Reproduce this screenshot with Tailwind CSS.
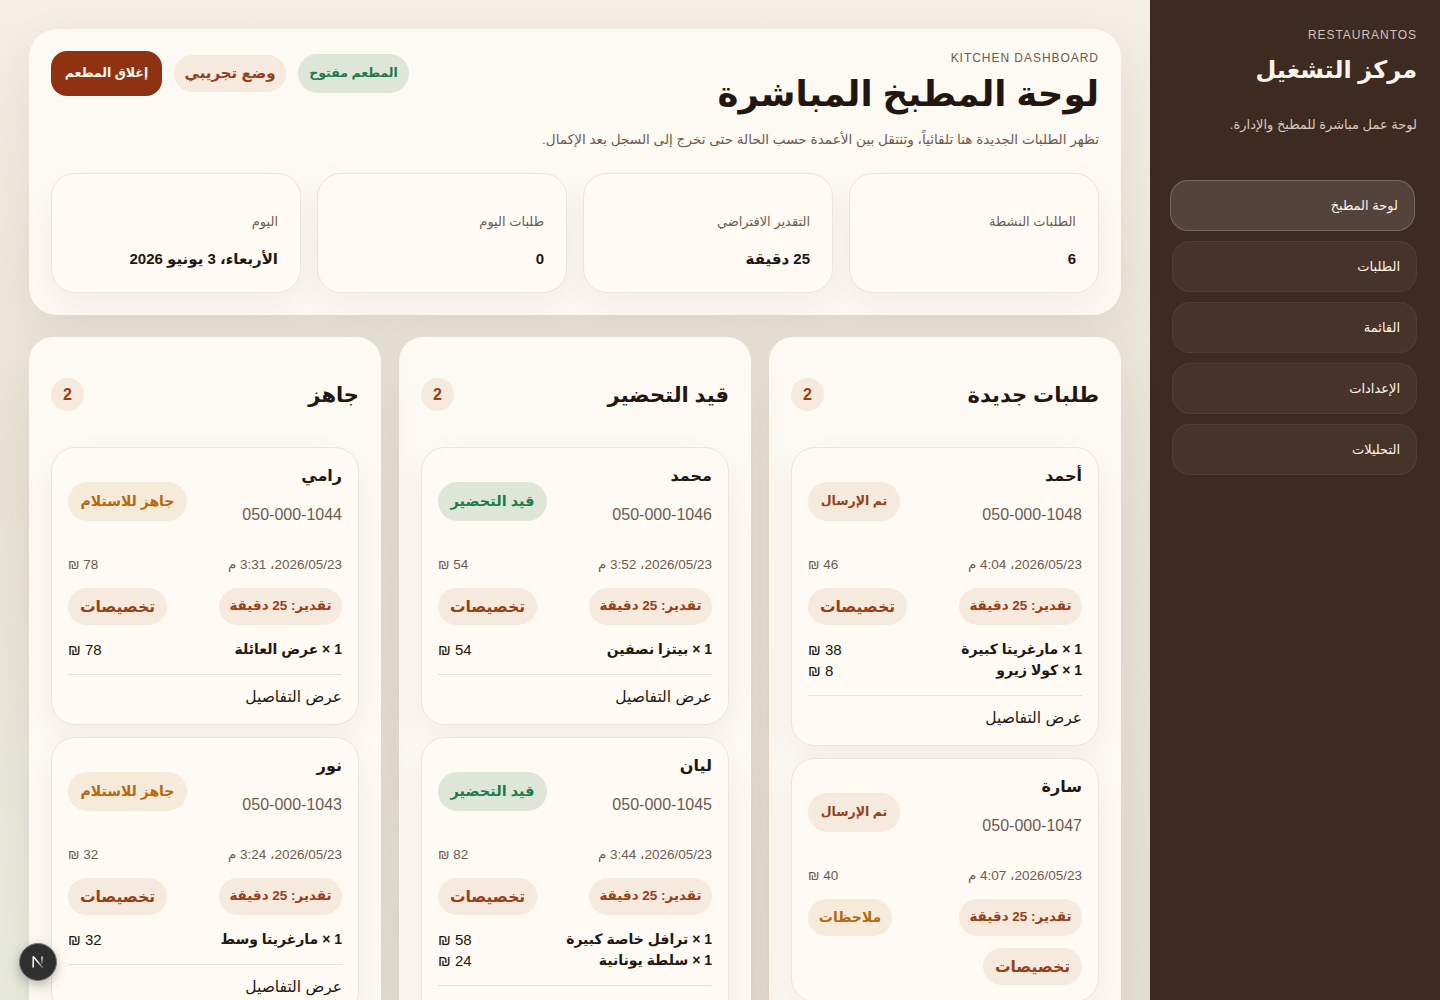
<!DOCTYPE html>
<html lang="ar" dir="rtl">
<head>
    <meta charset="UTF-8">
    <meta name="viewport" content="width=device-width, initial-scale=1.0">
    <title>لوحة المطبخ المباشرة</title>
    <script src="https://cdn.jsdelivr.net/npm/@tailwindcss/browser@4"></script>
</head>
<body class="font-['Liberation_Sans','DejaVu_Sans',sans-serif] text-[#211710]">
<div class="relative flex h-[1000px] w-[1440px] overflow-hidden bg-[radial-gradient(circle_at_0%_100%,#e9ebde_0,transparent_30%),linear-gradient(180deg,#f4eee4_0%,#e9e3d7_45%,#e6e0d4_100%)]">

    <!-- Sidebar -->
    <aside class="w-[290px] shrink-0 bg-[#3d2a20] pl-[22px] pr-[23px] pt-[27px] text-[#fbf4ec]">
        <p dir="ltr" class="text-right text-[12px] leading-[16px] tracking-[0.08em] text-[#cfc3b8]">RESTAURANTOS</p>
        <h2 class="mt-[7px] text-[24px] font-bold leading-[40px]">مركز التشغيل</h2>
        <p class="mt-[24px] text-[13px] leading-[22px] text-[#d6cabf]">لوحة عمل مباشرة للمطبخ والإدارة.</p>
        <nav class="mt-[44px] flex flex-col gap-[10px]">
            <a class="flex h-[51px] -translate-x-0.5 items-center rounded-[18px] border border-white/20 bg-white/12 px-[16px] text-[13px] font-medium">لوحة المطبخ</a>
            <a class="flex h-[51px] items-center rounded-[18px] border border-white/5 bg-white/5 px-[16px] text-[13px] font-medium">الطلبات</a>
            <a class="flex h-[51px] items-center rounded-[18px] border border-white/5 bg-white/5 px-[16px] text-[13px] font-medium">القائمة</a>
            <a class="flex h-[51px] items-center rounded-[18px] border border-white/5 bg-white/5 px-[16px] text-[13px] font-medium">الإعدادات</a>
            <a class="flex h-[51px] items-center rounded-[18px] border border-white/5 bg-white/5 px-[16px] text-[13px] font-medium">التحليلات</a>
        </nav>
    </aside>

    <main class="w-[1150px] shrink-0 p-[29px]">
        <!-- Header -->
        <section class="h-[286px] rounded-[28px] bg-[#fdf9f3] p-[22px] shadow-[0_18px_50px_rgba(70,50,30,0.08)]">
            <div class="flex items-start justify-between">
                <div>
                    <p dir="ltr" class="text-right text-[12px] leading-[14px] tracking-[0.08em] text-[#6f5a4e]">KITCHEN DASHBOARD</p>
                    <h1 class="mt-[2px] text-[35.5px] font-bold leading-[54px]">لوحة المطبخ المباشرة</h1>
                    <p class="mt-[8px] text-[13.6px] leading-[22px] text-[#6f5a4e]">تظهر الطلبات الجديدة هنا تلقائياً، وتنتقل بين الأعمدة حسب الحالة حتى تخرج إلى السجل بعد الإكمال.</p>
                </div>
                <div class="flex items-center gap-[12px]">
                    <span class="flex h-[39px] w-[111px] items-center justify-center rounded-full bg-[#dde6d7] text-[12.5px] font-bold text-[#1f7a4d]">المطعم مفتوح</span>
                    <span class="flex h-[37px] w-[112px] items-center justify-center rounded-full bg-[#f6e9dd] text-[15px] font-bold text-[#96401a]">وضع تجريبي</span>
                    <button class="h-[45px] w-[111px] rounded-[16px] bg-[#8f3212] text-[12.5px] font-bold text-[#fff8f1]">إغلاق المطعم</button>
                </div>
            </div>
            <div class="mt-[22px] grid grid-cols-4 gap-[16px]">
                <div class="h-[120px] rounded-[24px] border border-[#ebe4da] bg-[#fffaf4] px-[22px] pt-[37px] shadow-[0_14px_36px_rgba(70,50,30,0.06)]">
                    <p class="text-[13px] leading-[22px] text-[#6f5a4e]">الطلبات النشطة</p>
                    <p class="mt-[14px] text-[15px] font-bold leading-[24px]">6</p>
                </div>
                <div class="h-[120px] rounded-[24px] border border-[#ebe4da] bg-[#fffaf4] px-[22px] pt-[37px] shadow-[0_14px_36px_rgba(70,50,30,0.06)]">
                    <p class="text-[13px] leading-[22px] text-[#6f5a4e]">التقدير الافتراضي</p>
                    <p class="mt-[14px] text-[15px] font-bold leading-[24px]">25 دقيقة</p>
                </div>
                <div class="h-[120px] rounded-[24px] border border-[#ebe4da] bg-[#fffaf4] px-[22px] pt-[37px] shadow-[0_14px_36px_rgba(70,50,30,0.06)]">
                    <p class="text-[13px] leading-[22px] text-[#6f5a4e]">طلبات اليوم</p>
                    <p class="mt-[14px] text-[15px] font-bold leading-[24px]">0</p>
                </div>
                <div class="h-[120px] rounded-[24px] border border-[#ebe4da] bg-[#fffaf4] px-[22px] pt-[37px] shadow-[0_14px_36px_rgba(70,50,30,0.06)]">
                    <p class="text-[13px] leading-[22px] text-[#6f5a4e]">اليوم</p>
                    <p class="mt-[14px] text-[15px] font-bold leading-[24px]">الأربعاء، 3 يونيو 2026</p>
                </div>
            </div>
        </section>

        <!-- Board -->
        <div class="mt-[22px] grid grid-cols-3 items-start gap-[18px]">

            <!-- New orders -->
            <section class="rounded-[24px] bg-[#fdf9f3] p-[22px] shadow-[0_18px_50px_rgba(70,50,30,0.08)]">
                <div class="flex h-[71px] items-center justify-between">
                    <h3 class="text-[21px] font-bold leading-[32px]">طلبات جديدة</h3>
                    <span class="flex h-[33px] w-[33px] items-center justify-center rounded-full bg-[#f6e9dd] text-[16px] font-bold text-[#96401a]">2</span>
                </div>
                <div class="mt-[17px] flex flex-col gap-[12px]">
                    <article class="rounded-[24px] border border-[#ebe4da] bg-[#fffaf4] px-[16px] pb-[16px] pt-[17px] shadow-[0_14px_36px_rgba(70,50,30,0.06)]">
                        <div class="flex items-start justify-between">
                            <div>
                                <p class="text-[16px] font-bold leading-[22px]">أحمد</p>
                                <p dir="ltr" class="mt-[16px] text-right text-[16px] leading-[24px] text-[#6f5a4e]">050-000-1048</p>
                            </div>
                            <span class="mt-[17px] flex h-[39px] w-[92px] items-center justify-center rounded-full bg-[#f6e9dd] text-[12.5px] font-bold text-[#96401a]">تم الإرسال</span>
                        </div>
                        <div class="mt-[28px] flex items-center justify-between text-[13.5px] leading-[20px] text-[#6f5a4e]">
                            <span>2026/05/23، 4:04 م</span>
                            <span>46 ₪</span>
                        </div>
                        <div class="mt-[13px] flex flex-wrap justify-between gap-[12px]">
                            <span class="flex h-[37px] w-[123px] items-center justify-center rounded-full bg-[#f6e9dd] text-[13.5px] font-bold text-[#96401a]">تقدير: 25 دقيقة</span>
                            <span class="flex h-[37px] w-[99px] items-center justify-center rounded-full bg-[#f6e9dd] text-[15.5px] font-bold text-[#96401a]">تخصيصات</span>
                        </div>
                        <div class="mt-[14px] text-[15px] leading-[21px]">
                            <div class="flex justify-between"><span class="text-[14px] font-bold">1 × مارغريتا كبيرة</span><span>38 ₪</span></div>
                            <div class="flex justify-between"><span class="text-[14px] font-bold">1 × كولا زيرو</span><span>8 ₪</span></div>
                        </div>
                        <div class="mt-[14px] border-t border-[#e8e1d7] pt-[11px] text-[15.5px] font-medium leading-[22px]">عرض التفاصيل</div>
                    </article>
                    <article class="rounded-[24px] border border-[#ebe4da] bg-[#fffaf4] px-[16px] pb-[16px] pt-[17px] shadow-[0_14px_36px_rgba(70,50,30,0.06)]">
                        <div class="flex items-start justify-between">
                            <div>
                                <p class="text-[16px] font-bold leading-[22px]">سارة</p>
                                <p dir="ltr" class="mt-[16px] text-right text-[16px] leading-[24px] text-[#6f5a4e]">050-000-1047</p>
                            </div>
                            <span class="mt-[17px] flex h-[39px] w-[92px] items-center justify-center rounded-full bg-[#f6e9dd] text-[12.5px] font-bold text-[#96401a]">تم الإرسال</span>
                        </div>
                        <div class="mt-[28px] flex items-center justify-between text-[13.5px] leading-[20px] text-[#6f5a4e]">
                            <span>2026/05/23، 4:07 م</span>
                            <span>40 ₪</span>
                        </div>
                        <div class="mt-[13px] flex flex-wrap justify-between gap-[12px]">
                            <span class="flex h-[37px] w-[123px] items-center justify-center rounded-full bg-[#f6e9dd] text-[13.5px] font-bold text-[#96401a]">تقدير: 25 دقيقة</span>
                            <span class="flex h-[37px] w-[84px] items-center justify-center rounded-full bg-[#f6eadb] text-[14px] font-bold text-[#b46a0c]">ملاحظات</span>
                            <span class="flex h-[37px] w-[99px] items-center justify-center rounded-full bg-[#f6e9dd] text-[15.5px] font-bold text-[#96401a]">تخصيصات</span>
                        </div>
                    </article>
                </div>
            </section>

            <!-- Preparing -->
            <section class="rounded-[24px] bg-[#fdf9f3] p-[22px] shadow-[0_18px_50px_rgba(70,50,30,0.08)]">
                <div class="flex h-[71px] items-center justify-between">
                    <h3 class="text-[21px] font-bold leading-[32px]">قيد التحضير</h3>
                    <span class="flex h-[33px] w-[33px] items-center justify-center rounded-full bg-[#f6e9dd] text-[16px] font-bold text-[#96401a]">2</span>
                </div>
                <div class="mt-[17px] flex flex-col gap-[12px]">
                    <article class="rounded-[24px] border border-[#ebe4da] bg-[#fffaf4] px-[16px] pb-[16px] pt-[17px] shadow-[0_14px_36px_rgba(70,50,30,0.06)]">
                        <div class="flex items-start justify-between">
                            <div>
                                <p class="text-[16px] font-bold leading-[22px]">محمد</p>
                                <p dir="ltr" class="mt-[16px] text-right text-[16px] leading-[24px] text-[#6f5a4e]">050-000-1046</p>
                            </div>
                            <span class="mt-[17px] flex h-[39px] w-[109px] items-center justify-center rounded-full bg-[#dde6d7] text-[14.5px] font-bold text-[#1f7a4d]">قيد التحضير</span>
                        </div>
                        <div class="mt-[28px] flex items-center justify-between text-[13.5px] leading-[20px] text-[#6f5a4e]">
                            <span>2026/05/23، 3:52 م</span>
                            <span>54 ₪</span>
                        </div>
                        <div class="mt-[13px] flex flex-wrap justify-between gap-[12px]">
                            <span class="flex h-[37px] w-[123px] items-center justify-center rounded-full bg-[#f6e9dd] text-[13.5px] font-bold text-[#96401a]">تقدير: 25 دقيقة</span>
                            <span class="flex h-[37px] w-[99px] items-center justify-center rounded-full bg-[#f6e9dd] text-[15.5px] font-bold text-[#96401a]">تخصيصات</span>
                        </div>
                        <div class="mt-[14px] text-[15px] leading-[21px]">
                            <div class="flex justify-between"><span class="text-[14px] font-bold">1 × بيتزا نصفين</span><span>54 ₪</span></div>
                        </div>
                        <div class="mt-[14px] border-t border-[#e8e1d7] pt-[11px] text-[15.5px] font-medium leading-[22px]">عرض التفاصيل</div>
                    </article>
                    <article class="rounded-[24px] border border-[#ebe4da] bg-[#fffaf4] px-[16px] pb-[16px] pt-[17px] shadow-[0_14px_36px_rgba(70,50,30,0.06)]">
                        <div class="flex items-start justify-between">
                            <div>
                                <p class="text-[16px] font-bold leading-[22px]">ليان</p>
                                <p dir="ltr" class="mt-[16px] text-right text-[16px] leading-[24px] text-[#6f5a4e]">050-000-1045</p>
                            </div>
                            <span class="mt-[17px] flex h-[39px] w-[109px] items-center justify-center rounded-full bg-[#dde6d7] text-[14.5px] font-bold text-[#1f7a4d]">قيد التحضير</span>
                        </div>
                        <div class="mt-[28px] flex items-center justify-between text-[13.5px] leading-[20px] text-[#6f5a4e]">
                            <span>2026/05/23، 3:44 م</span>
                            <span>82 ₪</span>
                        </div>
                        <div class="mt-[13px] flex flex-wrap justify-between gap-[12px]">
                            <span class="flex h-[37px] w-[123px] items-center justify-center rounded-full bg-[#f6e9dd] text-[13.5px] font-bold text-[#96401a]">تقدير: 25 دقيقة</span>
                            <span class="flex h-[37px] w-[99px] items-center justify-center rounded-full bg-[#f6e9dd] text-[15.5px] font-bold text-[#96401a]">تخصيصات</span>
                        </div>
                        <div class="mt-[14px] text-[15px] leading-[21px]">
                            <div class="flex justify-between"><span class="text-[14px] font-bold">1 × ترافل خاصة كبيرة</span><span>58 ₪</span></div>
                            <div class="flex justify-between"><span class="text-[14px] font-bold">1 × سلطة يونانية</span><span>24 ₪</span></div>
                        </div>
                        <div class="mt-[14px] border-t border-[#e8e1d7] pt-[11px] text-[15.5px] font-medium leading-[22px]">عرض التفاصيل</div>
                    </article>
                </div>
            </section>

            <!-- Ready -->
            <section class="rounded-[24px] bg-[#fdf9f3] p-[22px] shadow-[0_18px_50px_rgba(70,50,30,0.08)]">
                <div class="flex h-[71px] items-center justify-between">
                    <h3 class="text-[21px] font-bold leading-[32px]">جاهز</h3>
                    <span class="flex h-[33px] w-[33px] items-center justify-center rounded-full bg-[#f6e9dd] text-[16px] font-bold text-[#96401a]">2</span>
                </div>
                <div class="mt-[17px] flex flex-col gap-[12px]">
                    <article class="rounded-[24px] border border-[#ebe4da] bg-[#fffaf4] px-[16px] pb-[16px] pt-[17px] shadow-[0_14px_36px_rgba(70,50,30,0.06)]">
                        <div class="flex items-start justify-between">
                            <div>
                                <p class="text-[16px] font-bold leading-[22px]">رامي</p>
                                <p dir="ltr" class="mt-[16px] text-right text-[16px] leading-[24px] text-[#6f5a4e]">050-000-1044</p>
                            </div>
                            <span class="mt-[17px] flex h-[39px] w-[119px] items-center justify-center rounded-full bg-[#f6eadb] text-[14px] font-bold text-[#b46a0c]">جاهز للاستلام</span>
                        </div>
                        <div class="mt-[28px] flex items-center justify-between text-[13.5px] leading-[20px] text-[#6f5a4e]">
                            <span>2026/05/23، 3:31 م</span>
                            <span>78 ₪</span>
                        </div>
                        <div class="mt-[13px] flex flex-wrap justify-between gap-[12px]">
                            <span class="flex h-[37px] w-[123px] items-center justify-center rounded-full bg-[#f6e9dd] text-[13.5px] font-bold text-[#96401a]">تقدير: 25 دقيقة</span>
                            <span class="flex h-[37px] w-[99px] items-center justify-center rounded-full bg-[#f6e9dd] text-[15.5px] font-bold text-[#96401a]">تخصيصات</span>
                        </div>
                        <div class="mt-[14px] text-[15px] leading-[21px]">
                            <div class="flex justify-between"><span class="text-[14px] font-bold">1 × عرض العائلة</span><span>78 ₪</span></div>
                        </div>
                        <div class="mt-[14px] border-t border-[#e8e1d7] pt-[11px] text-[15.5px] font-medium leading-[22px]">عرض التفاصيل</div>
                    </article>
                    <article class="rounded-[24px] border border-[#ebe4da] bg-[#fffaf4] px-[16px] pb-[16px] pt-[17px] shadow-[0_14px_36px_rgba(70,50,30,0.06)]">
                        <div class="flex items-start justify-between">
                            <div>
                                <p class="text-[16px] font-bold leading-[22px]">نور</p>
                                <p dir="ltr" class="mt-[16px] text-right text-[16px] leading-[24px] text-[#6f5a4e]">050-000-1043</p>
                            </div>
                            <span class="mt-[17px] flex h-[39px] w-[119px] items-center justify-center rounded-full bg-[#f6eadb] text-[14px] font-bold text-[#b46a0c]">جاهز للاستلام</span>
                        </div>
                        <div class="mt-[28px] flex items-center justify-between text-[13.5px] leading-[20px] text-[#6f5a4e]">
                            <span>2026/05/23، 3:24 م</span>
                            <span>32 ₪</span>
                        </div>
                        <div class="mt-[13px] flex flex-wrap justify-between gap-[12px]">
                            <span class="flex h-[37px] w-[123px] items-center justify-center rounded-full bg-[#f6e9dd] text-[13.5px] font-bold text-[#96401a]">تقدير: 25 دقيقة</span>
                            <span class="flex h-[37px] w-[99px] items-center justify-center rounded-full bg-[#f6e9dd] text-[15.5px] font-bold text-[#96401a]">تخصيصات</span>
                        </div>
                        <div class="mt-[14px] text-[15px] leading-[21px]">
                            <div class="flex justify-between"><span class="text-[14px] font-bold">1 × مارغريتا وسط</span><span>32 ₪</span></div>
                        </div>
                        <div class="mt-[14px] border-t border-[#e8e1d7] pt-[11px] text-[15.5px] font-medium leading-[22px]">عرض التفاصيل</div>
                    </article>
                </div>
            </section>
        </div>
    </main>

    <!-- Dev indicator -->
    <div class="absolute bottom-[19px] left-[19px] flex h-[38px] w-[38px] items-center justify-center rounded-full border border-[#777] bg-[#2f2f2f] shadow-[0_4px_12px_rgba(0,0,0,0.25)]">
        <svg width="14" height="14" viewBox="0 0 14 14" fill="none">
            <defs>
                <linearGradient id="nFade" x1="6" y1="6" x2="12" y2="13" gradientUnits="userSpaceOnUse">
                    <stop stop-color="#fff"/>
                    <stop offset="1" stop-color="#fff" stop-opacity="0.2"/>
                </linearGradient>
                <linearGradient id="nStem" x1="11" y1="2" x2="11" y2="9" gradientUnits="userSpaceOnUse">
                    <stop stop-color="#fff"/>
                    <stop offset="1" stop-color="#fff" stop-opacity="0.2"/>
                </linearGradient>
            </defs>
            <path d="M2.2 12.5V1.5" stroke="#fff" stroke-width="1.5"/>
            <path d="M2.2 1.5L12 13" stroke="url(#nFade)" stroke-width="1.5"/>
            <path d="M11 1.5V9" stroke="url(#nStem)" stroke-width="1.4"/>
        </svg>
    </div>
</div>
</body>
</html>
